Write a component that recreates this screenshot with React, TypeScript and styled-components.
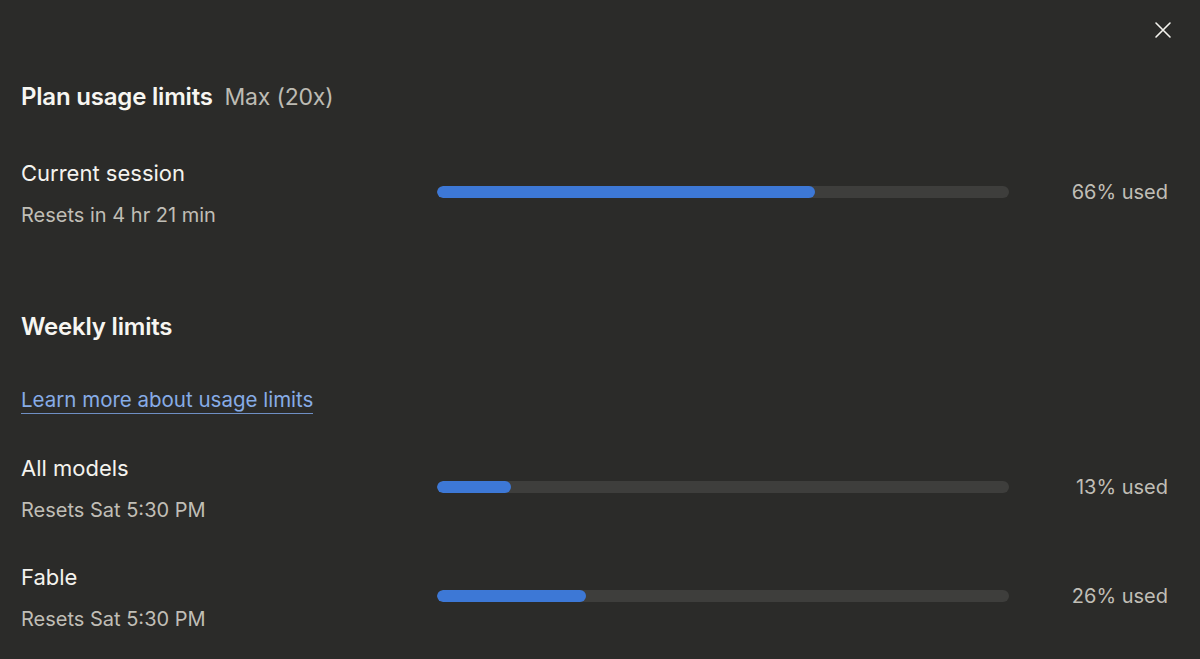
import styled, { createGlobalStyle } from 'styled-components';

const GlobalStyle = createGlobalStyle`
  html, body {
    margin: 0;
    padding: 0;
    background: #2b2b29;
  }
  body {
    font-family: Inter, "Noto Sans", sans-serif;
    color: #f4f3ee;
  }
`;

type Limit = { name: string; reset: string; percent: number };

const weekly: Limit[] = [
  { name: 'All models', reset: 'Resets Sat 5:30 PM', percent: 13 },
  { name: 'Fable', reset: 'Resets Sat 5:30 PM', percent: 26 },
];

function LimitRow({ limit }: { limit: Limit }) {
  return (
    <Row>
      <Info>
        <Label>{limit.name}</Label>
        <Sub>{limit.reset}</Sub>
      </Info>
      <Track>
        <Fill style={{ width: `${limit.percent}%` }} />
      </Track>
      <Used>{limit.percent}% used</Used>
    </Row>
  );
}

export default function App() {
  return (
    <>
      <GlobalStyle />
      <Panel>
        <TopBar>
          <CloseButton aria-label="Close">
            <svg width="18" height="18" viewBox="0 0 18 18" fill="none" stroke="currentColor" strokeWidth="1.6" strokeLinecap="round">
              <path d="M2 2L16 16M16 2L2 16" />
            </svg>
          </CloseButton>
        </TopBar>

        <Heading>
          Plan usage limits <Plan>Max (20x)</Plan>
        </Heading>

        <Section>
          <LimitRow limit={{ name: 'Current session', reset: 'Resets in 4 hr 21 min', percent: 66 }} />
        </Section>

        <WeeklyHeading>Weekly limits</WeeklyHeading>
        <LearnLink href="#">Learn more about usage limits</LearnLink>

        <WeeklyList>
          {weekly.map((l) => (
            <LimitRow key={l.name} limit={l} />
          ))}
        </WeeklyList>
      </Panel>
    </>
  );
}

const Panel = styled.div`
  width: 1200px;
  height: 659px;
  box-sizing: border-box;
  padding: 0 32px 0 21px;
  background: #2b2b29;
  overflow: hidden;
`;

const TopBar = styled.div`
  display: flex;
  justify-content: flex-end;
  padding-top: 21px;
  margin-right: -4px;
`;

const CloseButton = styled.button`
  background: none;
  border: none;
  padding: 0;
  color: #f4f3ee;
  width: 18px;
  height: 18px;
  cursor: pointer;
`;

const Heading = styled.h2`
  margin: 43px 0 0;
  font-size: 24px;
  font-weight: 600;
  line-height: 30px;
  letter-spacing: -0.2px;
  color: #f7f6f1;
`;

const Plan = styled.span`
  margin-left: 6px;
  font-weight: 400;
  font-size: 23px;
  color: #bdbbb3;
`;

const Section = styled.div`
  margin-top: 44px;
`;

const Row = styled.div`
  display: grid;
  grid-template-columns: 416px 572px 1fr;
  align-items: center;
  height: 72px;
`;

const Info = styled.div`
  display: flex;
  flex-direction: column;
  gap: 15px;
  padding-top: 3px;
`;

const Label = styled.div`
  font-size: 22px;
  line-height: 28px;
  color: #f4f3ee;
`;

const Sub = styled.div`
  font-size: 20px;
  line-height: 26px;
  color: #c0beb6;
`;

const Track = styled.div`
  height: 12px;
  border-radius: 6px;
  background: #3e3e3c;
  overflow: hidden;
`;

const Fill = styled.div`
  height: 100%;
  border-radius: 6px;
  background: #3d78d6;
`;

const Used = styled.div`
  text-align: right;
  font-size: 20px;
  color: #c0beb6;
`;

const WeeklyHeading = styled.h3`
  margin: 84px 0 0;
  font-size: 24px;
  font-weight: 600;
  line-height: 30px;
  letter-spacing: -0.2px;
  color: #f7f6f1;
`;

const LearnLink = styled.a`
  display: inline-block;
  margin-top: 45px;
  font-size: 20.5px;
  line-height: 26px;
  color: #87ace6;
  text-decoration: none;
  border-bottom: 1px solid #6f8fc4;
`;

const WeeklyList = styled.div`
  margin-top: 37px;
  display: flex;
  flex-direction: column;
  gap: 37px;
`;
